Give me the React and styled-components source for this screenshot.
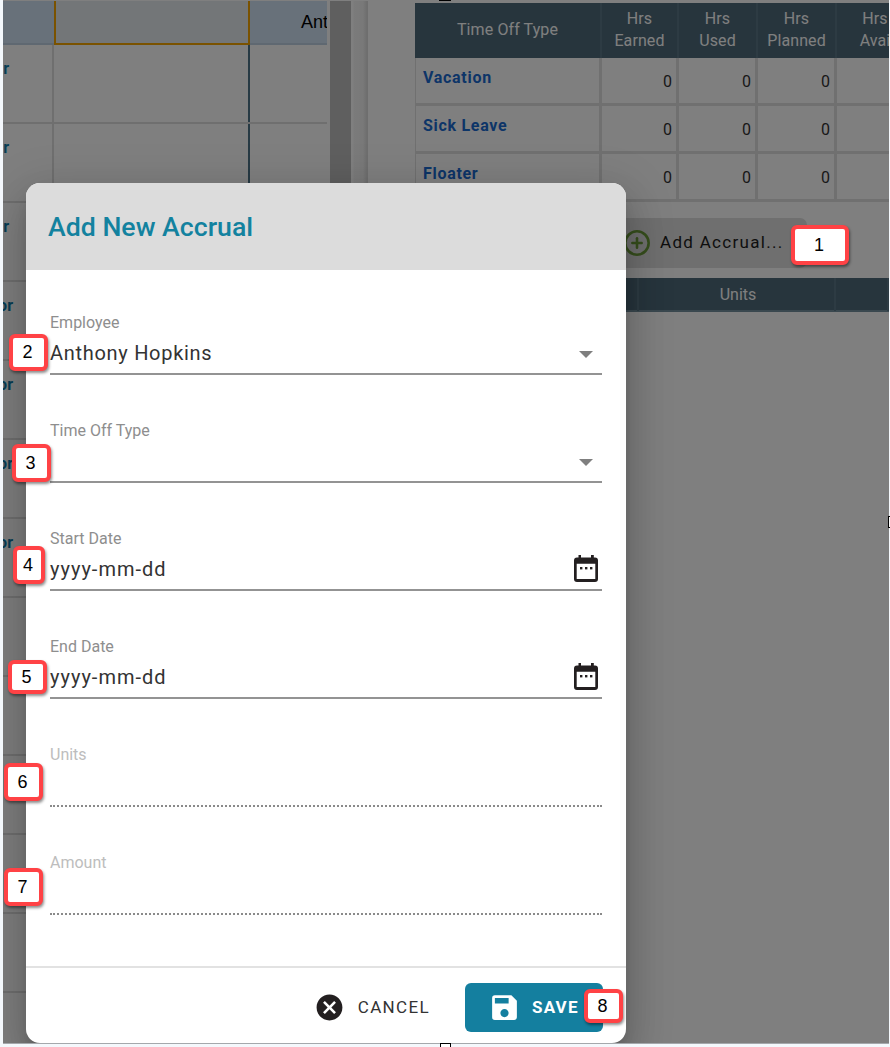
import React from "react";
import styled, { createGlobalStyle } from "styled-components";
import { CirclePlus } from "lucide-react";
import { MdSave, MdCancel } from "react-icons/md";

const GlobalStyle = createGlobalStyle`
  html, body {
    margin: 0;
    padding: 0;
    background: #f4f8fc;
    font-family: Roboto, "Liberation Sans", sans-serif;
  }
  * {
    box-sizing: border-box;
  }
`;

const Page = styled.div`
  position: relative;
  width: 890px;
  height: 1047px;
  padding: 0 1px 0 3px;
  overflow: hidden;
`;
const Frame = styled.div`
  position: relative;
  height: 1044px;
  padding-top: 1px;
  background: #fff;
  border-bottom: 1px solid #a4a8ac;
  display: flex;
  overflow: hidden;
`;

/* left schedule grid */
const Schedule = styled.div`
  width: 324px;
  flex: none;
  display: flex;
  flex-direction: column;
`;
const ScheduleRow = styled.div`
  flex: none;
  height: ${(p) => (p.$head ? "44px" : "79px")};
  display: grid;
  grid-template-columns: 51px 196px 77px;
  background: ${(p) => (p.$head ? "#d0e2f4" : "#fff")};
  border-bottom: 2px solid ${(p) => (p.$head ? "#bed0e2" : "#dedede")};
`;
const ScheduleCell = styled.div`
  border-right: 2px solid ${(p) => (p.$today ? "#4f7488" : "#dedede")};
  overflow: hidden;
  &:last-child {
    border-right: none;
  }
`;
const SelectedCell = styled.div`
  background: #e6ecf0;
  border: 2px solid #f4a400;
  border-top: none;
  height: 44px;
`;
const NameEnd = styled.div`
  width: 51px;
  padding-top: 14px;
  margin-left: ${(p) => p.$shift}px;
  text-align: right;
  font-size: 16px;
  font-weight: 700;
  color: #0f7aa8;
`;
const AntLabel = styled.div`
  padding: 11px 0 0 51px;
  font-family: "Liberation Sans", Arial, sans-serif;
  font-size: 18px;
  color: #000;
  white-space: nowrap;
  overflow: hidden;
`;

/* splitter between panels */
const ScrollTrack = styled.div`
  width: 3px;
  flex: none;
`;
const ScrollThumb = styled.div`
  width: 21px;
  flex: none;
  background: #bfbfbf;
`;
const Gutter = styled.div`
  width: 17px;
  flex: none;
  background: linear-gradient(90deg, #fff 0, #fff 2px, #f6f6f6 3px, #f2f2f2 12px, #dcdcdc 16px);
`;

/* right accrual panel */
const Accruals = styled.div`
  flex: 1;
  min-width: 0;
  margin-left: 47px;
  padding-top: 2px;
  overflow: hidden;
`;
const balanceColumns = "187px 77px 79px 79px 78px";
const HeadRow = styled.div`
  display: grid;
  grid-template-columns: ${balanceColumns};
  height: 55px;
  background: #4e6a7a;
`;
const HeadCell = styled.div`
  display: flex;
  align-items: center;
  justify-content: center;
  text-align: center;
  font-size: 16px;
  letter-spacing: 0.1px;
  line-height: 22px;
  color: #fff;
  white-space: pre;
  border-right: 2px solid #5a7686;
  padding-bottom: 1px;
`;
const BodyRow = styled.div`
  display: grid;
  grid-template-columns: ${balanceColumns};
  height: 48px;
`;
const TypeCell = styled.div`
  padding: 10px 0 0 7px;
  border-right: 3px solid #e0e0e0;
  border-bottom: 3px solid #e0e0e0;
  border-left: 1px solid #e0e0e0;
  font-size: 16px;
  line-height: 19px;
  font-weight: 700;
  letter-spacing: 0.7px;
  color: #1a6ad0;
`;
const NumCell = styled.div`
  padding: 14px 4px 0 0;
  border-right: 3px solid #e0e0e0;
  border-bottom: 3px solid #e0e0e0;
  text-align: right;
  font-size: 16px;
  line-height: 19px;
  color: #333;
`;
const AddButton = styled.div`
  margin: 16px 0 0 200px;
  width: 192px;
  height: 50px;
  padding-left: 8px;
  display: flex;
  align-items: center;
  gap: 9px;
  border-radius: 7px;
  background: #dedede;
  svg {
    color: #6c9c3a;
    flex: none;
  }
`;
const AddLabel = styled.span`
  margin-top: -3px;
  font-size: 17px;
  letter-spacing: 1.3px;
  color: #1c1c1c;
  white-space: nowrap;
`;
const UnitsHead = styled.div`
  margin-top: 10px;
  display: grid;
  grid-template-columns: 224px 197px 53px;
  height: 34px;
  background: #4e6a7a;
  border-bottom: 2px solid #74909e;
`;
const UnitsCell = styled.div`
  padding-left: 3px;
  border-right: 2px solid #5a7686;
  text-align: center;
  font-size: 16px;
  line-height: 33px;
  color: #fff;
`;

/* dialog */
const Backdrop = styled.div`
  position: absolute;
  inset: 0;
  padding: 183px 0 0 23px;
  background: rgba(0, 0, 0, 0.5);
  overflow: hidden;
`;
const Dialog = styled.div`
  width: 600px;
  height: 860px;
  background: #fff;
  border-radius: 14px;
  display: flex;
  flex-direction: column;
  overflow: hidden;
  box-shadow: 0 11px 15px -7px rgba(0, 0, 0, 0.2), 0 24px 38px 3px rgba(0, 0, 0, 0.14),
    0 9px 46px 8px rgba(0, 0, 0, 0.12);
`;
const DialogHeader = styled.div`
  height: 87px;
  flex: none;
  padding: 26px 22px 0;
  background: #dcdcdc;
  font-size: 26.7px;
  line-height: 36px;
  font-weight: 500;
  color: #13829f;
`;
const Form = styled.div`
  flex: 1;
  padding: 44px 24px 0;
  display: flex;
  flex-direction: column;
  gap: 47px;
`;
const Field = styled.div`
  height: 61px;
  display: flex;
  flex-direction: column;
`;
const Label = styled.div`
  font-size: 16px;
  line-height: 18px;
  color: ${(p) => (p.$disabled ? "#bdbdbd" : "#8e8e8e")};
`;
const InputRow = styled.div`
  height: 43px;
  display: flex;
  align-items: center;
  justify-content: space-between;
  border-bottom: ${(p) => (p.$disabled ? "2px dotted #8a8a8a" : "2px solid #939393")};
`;
const Value = styled.span`
  font-size: 20px;
  letter-spacing: ${(p) => (p.$date ? "1px" : "0.7px")};
  color: #333;
`;
const Caret = styled.span`
  width: 0;
  height: 0;
  margin: 4px 9px 0 0;
  border-left: 7px solid transparent;
  border-right: 7px solid transparent;
  border-top: 7px solid #7f7f7f;
`;
const CalendarSvg = styled.svg`
  width: 24px;
  height: 27px;
  margin-right: 4px;
  flex: none;
`;
const Footer = styled.div`
  height: 77px;
  flex: none;
  padding: 15px 23px 0 0;
  border-top: 2px solid #e2e2e2;
  display: flex;
  justify-content: flex-end;
  align-items: flex-start;
  gap: 35px;
`;
const CancelButton = styled.div`
  height: 49px;
  padding-bottom: 1px;
  display: flex;
  align-items: center;
  gap: 13px;
  font-size: 17px;
  font-weight: 400;
  letter-spacing: 1.35px;
  color: #333;
  svg {
    color: #231f20;
  }
`;
const SaveButton = styled.div`
  width: 138px;
  height: 49px;
  padding: 0 0 1px 23px;
  display: flex;
  align-items: center;
  gap: 11px;
  border-radius: 6px;
  background: #147f9f;
  font-size: 17px;
  font-weight: 700;
  letter-spacing: 1.2px;
  color: #fff;
`;

/* numbered callouts sitting on top of the screenshot */
const Callout = styled.div`
  position: absolute;
  left: ${(p) => p.$x}px;
  top: ${(p) => p.$y}px;
  width: ${(p) => p.$w}px;
  height: ${(p) => p.$h}px;
  padding-right: 2px;
  display: flex;
  align-items: center;
  justify-content: center;
  background: #fff;
  border: 4px solid #ff4245;
  border-radius: 6px;
  box-shadow: 1px 2px 3px rgba(0, 0, 0, 0.45);
  font-family: "Liberation Sans", Arial, sans-serif;
  font-size: 18px;
  color: #000;
`;
/* capture tool handles on the window edge */
const Handle = styled.div`
  position: absolute;
  left: ${(p) => p.$x}px;
  top: ${(p) => p.$y}px;
  width: ${(p) => p.$w}px;
  height: ${(p) => p.$h}px;
  background: #fff;
  border: 1px solid #000;
`;

const scheduleRows = [
  { text: "r", shift: -45 },
  { text: "r", shift: -45 },
  { text: "r", shift: -45 },
  { text: "or", shift: -41 },
  { text: "or", shift: -41 },
  { text: "or", shift: -41 },
  { text: "or", shift: -41 },
  {},
  {},
  {},
  {},
  {},
  {},
];
const balances = ["Vacation", "Sick Leave", "Floater"];
const callouts = [
  { n: 1, x: 791, y: 225, w: 58, h: 40 },
  { n: 2, x: 9, y: 334, w: 39, h: 37 },
  { n: 3, x: 12, y: 444, w: 39, h: 38 },
  { n: 4, x: 13, y: 546, w: 32, h: 38 },
  { n: 5, x: 8, y: 660, w: 39, h: 34 },
  { n: 6, x: 4, y: 763, w: 39, h: 38 },
  { n: 7, x: 4, y: 868, w: 39, h: 38 },
  { n: 8, x: 584, y: 989, w: 39, h: 34 },
];

function CalendarIcon() {
  return (
    <CalendarSvg viewBox="0 0 24 27">
      <path
        fill="#231f20"
        fillRule="evenodd"
        d="M4.500 0H7v2.600h10V0h2.800v2.600H21a3 3 0 0 1 3 3V24a3 3 0 0 1-3 3H3a3 3 0 0 1-3-3V5.600a3 3 0 0 1 3-3h1.500zM2.700 8.800V24h18.600V8.800z"
      />
      <rect x="6" y="12" width="2.400" height="2.400" fill="#231f20" />
      <rect x="11" y="12" width="2.400" height="2.400" fill="#231f20" />
      <rect x="16" y="12" width="2.400" height="2.400" fill="#231f20" />
    </CalendarSvg>
  );
}

function FormField({ label, value, select, date, disabled }) {
  return (
    <Field>
      <Label $disabled={disabled}>{label}</Label>
      <InputRow $disabled={disabled}>
        <Value $date={date}>{value}</Value>
        {select && <Caret />}
        {date && <CalendarIcon />}
      </InputRow>
    </Field>
  );
}

export default function App() {
  return (
    <Page>
      <GlobalStyle />
      <Frame>
        <Schedule>
          <ScheduleRow $head>
            <div />
            <SelectedCell />
            <AntLabel>Ant</AntLabel>
          </ScheduleRow>
          {scheduleRows.map((row, i) => (
            <ScheduleRow key={i}>
              <ScheduleCell>{row.text && <NameEnd $shift={row.shift}>{row.text}</NameEnd>}</ScheduleCell>
              <ScheduleCell $today />
              <ScheduleCell />
            </ScheduleRow>
          ))}
        </Schedule>
        <ScrollTrack />
        <ScrollThumb />
        <Gutter />
        <Accruals>
          <HeadRow>
            <HeadCell>Time Off Type</HeadCell>
            <HeadCell>{"Hrs\nEarned"}</HeadCell>
            <HeadCell>{"Hrs\nUsed"}</HeadCell>
            <HeadCell>{"Hrs\nPlanned"}</HeadCell>
            <HeadCell>{"Hrs\nAvai"}</HeadCell>
          </HeadRow>
          {balances.map((type) => (
            <BodyRow key={type}>
              <TypeCell>{type}</TypeCell>
              <NumCell>0</NumCell>
              <NumCell>0</NumCell>
              <NumCell>0</NumCell>
              <NumCell />
            </BodyRow>
          ))}
          <AddButton>
            <CirclePlus size={28} strokeWidth={2.2} />
            <AddLabel>Add Accrual...</AddLabel>
          </AddButton>
          <UnitsHead>
            <UnitsCell />
            <UnitsCell>Units</UnitsCell>
            <UnitsCell />
          </UnitsHead>
        </Accruals>
        <Backdrop>
          <Dialog>
            <DialogHeader>Add New Accrual</DialogHeader>
            <Form>
              <FormField label="Employee" value="Anthony Hopkins" select />
              <FormField label="Time Off Type" select />
              <FormField label="Start Date" value="yyyy-mm-dd" date />
              <FormField label="End Date" value="yyyy-mm-dd" date />
              <FormField label="Units" disabled />
              <FormField label="Amount" disabled />
            </Form>
            <Footer>
              <CancelButton>
                <MdCancel size={31} />
                CANCEL
              </CancelButton>
              <SaveButton>
                <MdSave size={33} />
                SAVE
              </SaveButton>
            </Footer>
          </Dialog>
        </Backdrop>
      </Frame>
      <Handle $x={439} $y={-1} $w={12} $h={2} />
      <Handle $x={888} $y={516} $w={3} $h={12} />
      <Handle $x={440} $y={1043} $w={11} $h={6} />
      {callouts.map((c) => (
        <Callout key={c.n} $x={c.x} $y={c.y} $w={c.w} $h={c.h}>
          {c.n}
        </Callout>
      ))}
    </Page>
  );
}
